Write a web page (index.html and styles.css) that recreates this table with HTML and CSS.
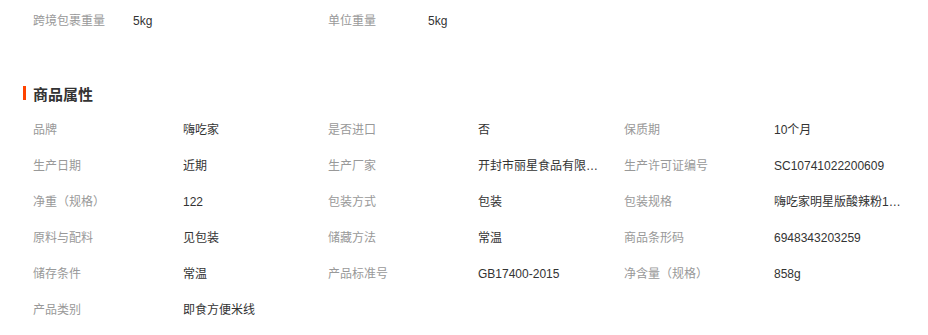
FILE: index.html
```html
<!DOCTYPE html>
<html lang="zh-CN">
<head>
<meta charset="utf-8">
<title>商品属性</title>
<link rel="stylesheet" href="styles.css">
</head>
<body>
<div class="page">
  <div class="weights">
    <div class="witem"><span class="wlabel">跨境包裹重量</span><span class="wvalue">5kg</span></div>
    <div class="witem"><span class="wlabel">单位重量</span><span class="wvalue">5kg</span></div>
  </div>

  <h2 class="title"><span class="bar"></span>商品属性</h2>

  <div class="attrs">
    <div class="attr"><span class="label">品牌</span><span class="value">嗨吃家</span></div>
    <div class="attr"><span class="label">是否进口</span><span class="value">否</span></div>
    <div class="attr"><span class="label">保质期</span><span class="value">10个月</span></div>

    <div class="attr"><span class="label">生产日期</span><span class="value">近期</span></div>
    <div class="attr"><span class="label">生产厂家</span><span class="value" title="开封市丽星食品有限公司">开封市丽星食品有限…</span></div>
    <div class="attr"><span class="label">生产许可证编号</span><span class="value">SC10741022200609</span></div>

    <div class="attr"><span class="label">净重（规格）</span><span class="value">122</span></div>
    <div class="attr"><span class="label">包装方式</span><span class="value">包装</span></div>
    <div class="attr"><span class="label">包装规格</span><span class="value" title="嗨吃家明星版酸辣粉1桶装">嗨吃家明星版酸辣粉1…</span></div>

    <div class="attr"><span class="label">原料与配料</span><span class="value">见包装</span></div>
    <div class="attr"><span class="label">储藏方法</span><span class="value">常温</span></div>
    <div class="attr"><span class="label">商品条形码</span><span class="value">6948343203259</span></div>

    <div class="attr"><span class="label">储存条件</span><span class="value">常温</span></div>
    <div class="attr"><span class="label">产品标准号</span><span class="value">GB17400-2015</span></div>
    <div class="attr"><span class="label">净含量（规格）</span><span class="value">858g</span></div>

    <div class="attr"><span class="label">产品类别</span><span class="value">即食方便米线</span></div>
  </div>
</div>
</body>
</html>
```

FILE: styles.css
```css
* { box-sizing: border-box; }

body {
  margin: 0;
  background: #fff;
  font-family: "Liberation Sans", "Noto Sans CJK SC", sans-serif;
  font-size: 12px;
  color: #333;
}

.page {
  padding: 3px 0 0 33px;
}

.weights {
  display: flex;
  height: 36px;
  line-height: 36px;
}

.witem {
  display: flex;
  width: 295px;
}

.wlabel {
  width: 100px;
  color: #999;
}

.wvalue {
  color: #333;
}

.title {
  display: flex;
  align-items: center;
  margin: 44px 0 9px -10px;
  height: 20px;
  font-size: 15px;
  font-weight: bold;
  color: #333;
}

.bar {
  width: 3px;
  height: 14px;
  background: #ff4400;
  margin-right: 7px;
}

.attrs {
  display: grid;
  grid-template-columns: 295px 296px 296px;
  grid-auto-rows: 36px;
  line-height: 36px;
}

.attr {
  display: flex;
  min-width: 0;
}

.label {
  width: 150px;
  flex: none;
  color: #999;
}

.value {
  white-space: nowrap;
  color: #333;
}
```
